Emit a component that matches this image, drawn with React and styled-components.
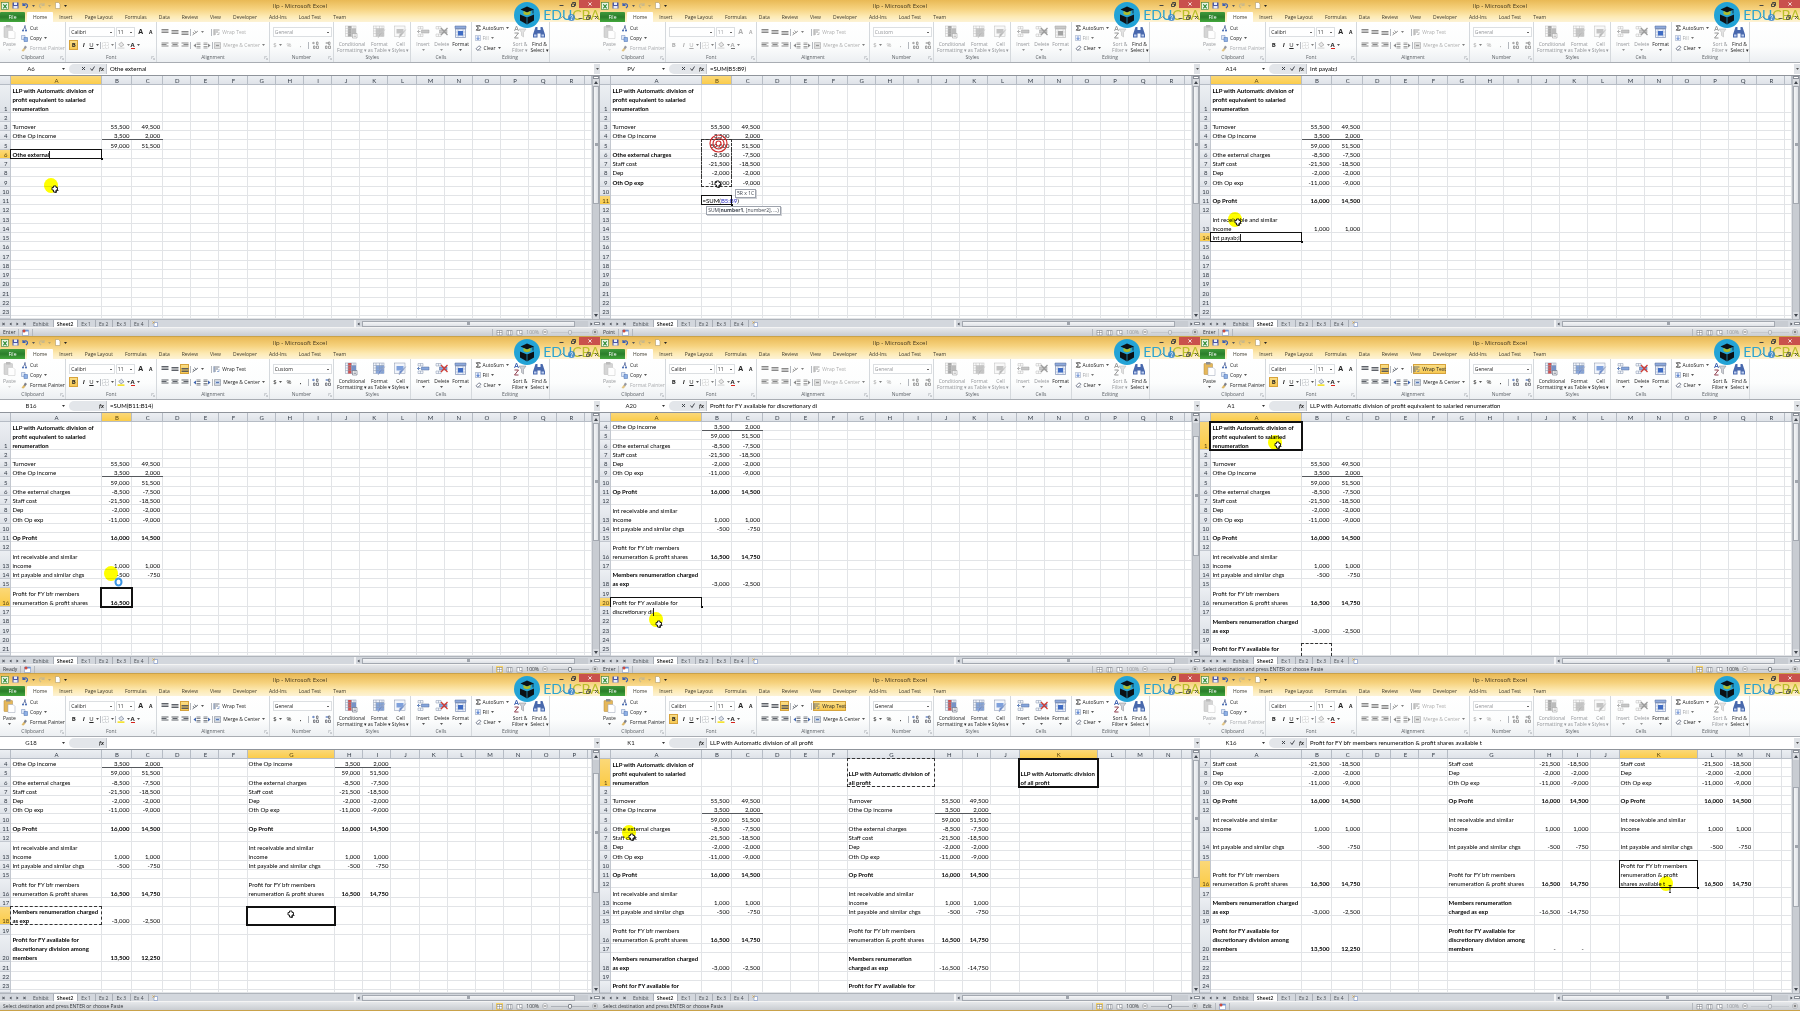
import React from 'react';
import styled, { createGlobalStyle, css } from 'styled-components';

const GlobalStyle = createGlobalStyle`
  * { box-sizing: border-box; }
  body { margin: 0; background: #c9a24a; }
  button, select, input {
    font: inherit;
    color: inherit;
    border: 0;
    padding: 0;
    margin: 0;
    background: none;
    appearance: none;
    border-radius: 0;
    outline: none;
  }
`;

const uiFont = '"Open Sans", "Noto Sans", sans-serif';
const cellFont = 'Lato, "Open Sans", sans-serif';

/* ---------- shell ---------- */

const Wall = styled.main`
  display: grid;
  grid-template-columns: repeat(3, minmax(0, 1fr));
  grid-auto-rows: minmax(337px, 1fr);
  min-height: 100vh;
`;
const Window = styled.section`
  display: flex;
  flex-direction: column;
  overflow: hidden;
  background: #fff;
  border-bottom: 1px solid #c9a24a;
  font-family: ${uiFont};
  font-size: 5px;
  line-height: 6px;
  color: #222;
`;
const Head = styled.header`
  position: relative;
  background: linear-gradient(#e9b955, #f6d27e 40%, #fdeab4 75%, #fdf3d6);
`;
const TitleBar = styled.div`
  display: grid;
  grid-template-columns: 1fr auto 1fr;
  align-items: start;
  height: 12px;
`;
const QuickBar = styled.div`
  display: flex;
  align-items: center;
  gap: 3px;
  height: 11px;
  padding-left: 1px;
`;
const Title = styled.h1`
  margin: 0;
  font-size: 6px;
  font-weight: 400;
  line-height: 12px;
  color: #40351c;
`;
const WindowButtons = styled.div`
  display: flex;
  justify-content: flex-end;
  height: 8px;
`;
const WinButton = styled.button`
  display: flex;
  align-items: center;
  justify-content: center;
  width: ${({ $close }) => ($close ? '21px' : '12px')};
  height: 8px;
  background: ${({ $close }) => ($close ? '#c9504c' : 'transparent')};
`;
const Tabs = styled.nav`
  display: flex;
  align-items: stretch;
  height: 10px;
`;
const FileTab = styled.button`
  width: 25px;
  margin-right: 2px;
  color: #fff;
  background: linear-gradient(#3f9a3c, #2a7d2a 50%, #43a83c);
  border-radius: 1px 1px 0 0;
`;
const Tab = styled.button`
  padding: 0 6px;
  color: #3d392c;
  background: ${({ $on }) => ($on ? '#fff' : 'transparent')};
  border-radius: 1px 1px 0 0;
`;

/* ---------- logo ---------- */

const Badge = styled.div`
  position: absolute;
  z-index: 3;
  top: 2px;
  right: 0;
  display: flex;
  align-items: center;
  gap: 3px;
  height: 26px;
`;
const Brand = styled.span`
  font-family: Lato, sans-serif;
  font-size: 14px;
  line-height: 16px;
  color: ${({ $gold }) => ($gold ? '#b9bf2a' : '#2ca4cf')};
`;
const MdiButtons = styled.div`
  position: absolute;
  z-index: 4;
  right: 1px;
  bottom: 0;
  height: 10px;
  display: flex;
  align-items: center;
  gap: 3px;
  opacity: 0.8;
`;

/* ---------- ribbon ---------- */

const Ribbon = styled.div`
  display: flex;
  height: 41px;
  background: linear-gradient(#fff, #fcfdfd 60%, #eceff2);
  border-bottom: 1px solid #a9adb3;
`;
const Group = styled.div`
  flex: ${({ $w }) => $w} 0 0;
  min-width: 0;
  display: flex;
  flex-direction: column;
  border-right: ${({ $last }) => ($last ? 0 : '1px solid #d5d9dd')};
`;
const GroupBody = styled.div`
  flex: 1;
  display: flex;
  flex-direction: ${({ $rows }) => ($rows ? 'column' : 'row')};
  gap: ${({ $gap = 1 }) => $gap}px;
  padding: ${({ $rows }) => ($rows ? '4px 1px 0 3px' : '1px 1px 0 3px')};
`;
const GroupLabel = styled.div`
  display: grid;
  grid-template-columns: 5px 1fr 5px;
  align-items: center;
  text-align: center;
  line-height: 9px;
  height: 9px;
  color: #5a5f64;
`;
const Line = styled.div`
  display: flex;
  align-items: center;
  justify-content: ${({ $spread }) => ($spread ? 'space-between' : 'flex-start')};
  gap: ${({ $gap = 2 }) => $gap}px;
  height: 12px;
`;
const Stack = styled.div`
  display: flex;
  flex-direction: column;
`;
const Small = styled.button`
  display: flex;
  align-items: center;
  gap: 2px;
  height: 10px;
  white-space: nowrap;
  color: ${({ $off }) => ($off ? '#94969a' : '#222')};
  opacity: ${({ $off }) => ($off ? 0.8 : 1)};
`;
const Tool = styled.button`
  display: flex;
  align-items: center;
  justify-content: center;
  gap: 2px;
  min-width: 9px;
  height: 10px;
  white-space: nowrap;
  color: ${({ $off }) => ($off ? '#8f9194' : '#222')};
  ${({ $off }) => $off && css`filter: grayscale(1); opacity: 0.75;`}
  ${({ $on }) => $on && css`
    background: linear-gradient(#fbe08a, #f6c64d);
    box-shadow: inset 0 0 0 1px #d6a33c;
  `}
`;
const Big = styled.button`
  display: flex;
  flex-direction: column;
  align-items: center;
  justify-content: flex-start;
  flex: ${({ $w }) => ($w ? `${$w} 0 0` : 'none')};
  min-width: 0;
  padding-top: 2px;
  gap: 2px;
  white-space: nowrap;
  color: ${({ $off }) => ($off ? '#94969a' : '#222')};
  svg { flex: none; }
  ${({ $off }) => $off && css`svg { filter: grayscale(1); opacity: 0.6; }`}
`;
const Pick = styled.select`
  flex: ${({ $w }) => $w} 0 0;
  min-width: 0;
  height: 10px;
  padding-left: 1px;
  color: ${({ $off }) => ($off ? '#94969a' : '#222')};
  border: 1px solid #dcdfe2;
  background: #fff linear-gradient(#666, #666) right 2px center / 2px 1px no-repeat;
  opacity: 1;
`;
const Glyph = styled.span`
  font-size: ${({ $s = 6 }) => $s}px;
  font-weight: ${({ $b }) => ($b ? 700 : 400)};
  font-style: ${({ $i }) => ($i ? 'italic' : 'normal')};
  text-decoration: ${({ $u }) => ($u ? 'underline' : 'none')};
  border-bottom: ${({ $bar }) => ($bar ? `1px solid ${$bar}` : 0)};
`;

/* ---------- formula bar ---------- */

const FormulaBar = styled.div`
  display: flex;
  align-items: center;
  height: 13px;
  padding-bottom: 1px;
  background: #fff;
  border-bottom: 1px solid #8f949b;
  font-family: ${cellFont};
  font-size: 6px;
`;
const NameBox = styled.input`
  width: 62px;
  height: 10px;
  text-align: center;
`;
const FormulaTools = styled.div`
  display: flex;
  align-items: center;
  justify-content: flex-end;
  gap: 4px;
  width: 38px;
  height: 10px;
  margin-left: 4px;
  padding-right: 2px;
  background: #e3e6ea;
  border-radius: 5px 0 0 5px;
  border-right: 1px solid #c3c7cc;
`;
const FormulaInput = styled.input`
  flex: 1;
  min-width: 0;
  height: 10px;
  padding-left: 3px;
  color: #000;
`;
const Expand = styled.button`
  width: 6px;
  height: 10px;
  display: flex;
  align-items: center;
  justify-content: center;
  background: #dfe2e6;
`;

/* ---------- sheet ---------- */

const SheetArea = styled.div`
  position: relative;
  flex: 1;
  display: flex;
  min-height: 0;
`;
const Grid = styled.table`
  flex: 1;
  min-width: 0;
  min-height: 0;
  contain: size;
  overflow: hidden;
  display: grid;
  grid-template-columns: ${({ $cols }) => $cols};
  grid-template-rows: ${({ $rows }) => $rows};
  font-family: ${cellFont};
  font-size: 6px;
  line-height: 9px;
  color: #000;
  thead, tbody, tr { display: contents; }
`;
const headFill = css`
  background: ${({ $on }) => ($on ? 'linear-gradient(#fbd878, #fbcb45)' : 'linear-gradient(#eceff3, #dde1e7)')};
  color: ${({ $on }) => ($on ? '#5a4612' : '#333b46')};
  font-weight: 400;
  padding: 0;
  overflow: hidden;
`;
const ColHead = styled.th`
  ${headFill}
  box-shadow: inset -1px -1px #b6bcc5;
  line-height: 10px;
  text-align: center;
`;
const RowHead = styled.th`
  ${headFill}
  display: flex;
  align-items: flex-end;
  justify-content: center;
  box-shadow: inset -1px -1px #c3c8d0;
`;
const Cell = styled.td`
  position: relative;
  display: flex;
  align-items: ${({ $top }) => ($top ? 'flex-start' : 'flex-end')};
  justify-content: ${({ $num }) => ($num ? 'flex-end' : 'flex-start')};
  min-width: 0;
  min-height: 0;
  padding: ${({ $num }) => ($num ? '0 3px 0 0' : '0 0 0 1px')};
  box-shadow: inset -1px -1px #e2e4e7;
  font-weight: ${({ $bold }) => ($bold ? 700 : 400)};
  white-space: pre;
  ${({ $rule }) => $rule && css`box-shadow: inset 0 -1px #55585d;`}
  ${({ $mode }) => $mode && css`
    z-index: 1;
    &::after {
      content: '';
      position: absolute;
      inset: ${$mode === 'select' ? '-1px -1px -1px -2px' : '-1px 0 0 -1px'};
      border: ${$mode === 'select' ? '2px' : '1px'} solid #111;
      ${$mode === 'open' && 'border-bottom: 0;'}
      pointer-events: none;
    }
    &::before {
      content: '';
      position: absolute;
      right: -1px;
      bottom: -1px;
      width: 2px;
      height: 2px;
      background: #111;
      z-index: 1;
    }
  `}
  ${({ $ants }) => $ants && css`
    z-index: 1;
    &::after {
      content: '';
      position: absolute;
      inset: -1px 0 0 -1px;
      border: 0 dashed #333;
      border-left-width: 1px;
      border-right-width: 1px;
      border-top-width: ${$ants.includes('t') ? '1px' : 0};
      border-bottom-width: ${$ants.includes('b') ? '1px' : 0};
      pointer-events: none;
    }
  `}
`;
const Caret = styled.span`
  align-self: flex-end;
  width: 1px;
  height: 8px;
  background: #222;
`;
const RangeRef = styled.span`
  color: #2a2ac0;
`;

const VScroll = styled.div`
  width: 8px;
  display: flex;
  flex-direction: column;
  align-items: center;
  background: #d9dce1;
  border-left: 1px solid #b9bdc4;
  border-right: 1px solid #a6aab1;
`;
const SplitBox = styled.div`
  width: 6px;
  height: 3px;
  background: #fff;
  border: 1px solid #8a8f97;
`;
const Arrow = styled.button`
  width: 6px;
  height: 7px;
  display: flex;
  align-items: center;
  justify-content: center;
`;
const Track = styled.div`
  flex: 1;
  display: flex;
  flex-direction: ${({ $h }) => ($h ? 'row' : 'column')};
  width: ${({ $h }) => ($h ? 'auto' : '6px')};
  height: ${({ $h }) => ($h ? '6px' : 'auto')};
  background: #c8ccd2;
`;
const Gap = styled.div`
  flex: ${({ $n }) => $n} 0 0;
`;
const Thumb = styled.div`
  flex: ${({ $n }) => $n} 0 0;
  display: flex;
  align-items: center;
  justify-content: center;
  background: linear-gradient(${({ $h }) => ($h ? '180deg' : '90deg')}, #f4f5f7, #dfe2e7);
  border: 1px solid #a3a8b0;
  &::after {
    content: '';
    width: 3px;
    height: 3px;
    background: #a0a5ad;
  }
`;

/* ---------- footer ---------- */

const SheetTabs = styled.div`
  display: flex;
  align-items: center;
  height: 8px;
  padding-left: 2px;
  background: #d3d7dd;
  border-top: 1px solid #b0b5bc;
  color: #4a4f55;
`;
const NavArrows = styled.div`
  display: flex;
  gap: 4px;
  width: 28px;
`;
const SheetTab = styled.button`
  height: 7px;
  padding: 0 4px 0 3px;
  line-height: 6px;
  color: ${({ $on }) => ($on ? '#111' : '#4a4f55')};
  font-weight: ${({ $on }) => ($on ? 600 : 400)};
  background: ${({ $on }) => ($on ? '#fff' : 'transparent')};
  border-right: 1px solid #a9aeb6;
`;
const TabSpace = styled.div`
  flex: 197 0 0;
  padding-left: 3px;
  display: flex;
`;
const HScroll = styled.div`
  flex: 238 0 0;
  display: flex;
  align-items: center;
  border-left: 2px solid #f4f5f7;
`;
const StatusBar = styled.footer`
  display: flex;
  align-items: center;
  justify-content: space-between;
  height: 9px;
  padding: 0 2px 0 3px;
  background: linear-gradient(#e6e8eb, #c9ccd1);
  border-top: 1px solid #f4f4f4;
  color: #33363b;
`;
const StatusPart = styled.div`
  display: flex;
  align-items: center;
  gap: 3px;
`;
const Divider = styled.i`
  width: 1px;
  height: 7px;
  background: #b4b8be;
`;
const Faded = styled(StatusPart)`
  color: ${({ $off }) => ($off ? '#94979c' : '#33363a')};
`;
const Zoom = styled.input`
  width: 38px;
  height: 6px;
  background: linear-gradient(#aeb2b8, #aeb2b8) center / 100% 1px no-repeat;
  opacity: ${({ $off }) => ($off ? 0.4 : 1)};
  &::-webkit-slider-thumb {
    appearance: none;
    width: 4px;
    height: 5px;
    border: 1px solid #80858c;
    border-radius: 1px 1px 2px 2px;
    background: #f7f7f7;
  }
`;

/* ---------- pointer and tips floating over the sheet ---------- */

const Pin = styled.div`
  position: absolute;
  z-index: 5;
  left: ${({ $x }) => $x}%;
  top: ${({ $y }) => $y}%;
  display: flex;
  ${({ $multiply }) => $multiply && 'mix-blend-mode: multiply;'}
`;
const Tip = styled(Pin)`
  height: 9px;
  padding: 0 1px;
  line-height: 7px;
  color: #3c424d;
  background: #fff;
  border: 1px solid #9ea3ad;
  box-shadow: 1px 1px 0 #cfd1d5;
  white-space: nowrap;
`;

/* ---------- icons ---------- */

const Svg = ({ w = 7, h = w, box = '0 0 14 14', children }) => (
  <svg width={w} height={h} viewBox={box} fill="none" aria-hidden="true">{children}</svg>
);
const Down = ({ c = '#555' }) => (
  <svg width="3" height="2" viewBox="0 0 6 4" aria-hidden="true"><path d="M0 0h6L3 4z" fill={c} /></svg>
);
const ExcelIcon = () => (
  <Svg w={8}>
    <rect x="1" y="1" width="12" height="12" fill="#e9f5e6" stroke="#2f7d32" />
    <path d="M4 4l6 7M10 4l-6 7" stroke="#2f8a35" strokeWidth="2" />
  </Svg>
);
const SaveIcon = () => (
  <Svg>
    <path d="M1 1h12v12H1z" fill="#4a56a8" />
    <path d="M4 1h6v5H4zM3 8h8v5H3z" fill="#e8ecf8" />
  </Svg>
);
const UndoIcon = ({ c = '#3b5fb5', flip }) => (
  <Svg>
    <path d="M3 6c4-4 9-2 8 3l-3 3M2 2v5h5" stroke={c} strokeWidth="2.4" transform={flip ? 'matrix(-1 0 0 1 14 0)' : undefined} />
  </Svg>
);
const PageIcon = () => (
  <Svg><path d="M3 1h6l3 3v9H3z" fill="#fff" stroke="#a08d5b" /></Svg>
);
const PasteIcon = () => (
  <Svg w={13} h={14} box="0 0 26 28">
    <rect x="2" y="3" width="17" height="22" rx="1" fill="#e5b75a" stroke="#b08a3c" />
    <rect x="6" y="0" width="9" height="5" fill="#8b8f96" />
    <path d="M10 11h10l4 4v12H10z" fill="#fff" stroke="#9aa3b5" />
  </Svg>
);
const CutIcon = () => (
  <Svg><path d="M9 1L5 9M7 1l3 8" stroke="#4b5f97" strokeWidth="1.6" /><circle cx="4" cy="11" r="2" fill="#3d62ad" /><circle cx="10" cy="11" r="2" fill="#3d62ad" /></Svg>
);
const CopyIcon = () => (
  <Svg><path d="M1 1h7v8H1z" fill="#dbe6f7" stroke="#6d86b8" /><path d="M6 5h7v8H6z" fill="#8fb1e6" stroke="#4068ad" /></Svg>
);
const BrushIcon = () => (
  <Svg><path d="M8 1l4 3-4 5-3-2z" fill="#7d7f88" /><path d="M5 6l4 3-4 4-4-1z" fill="#ddb867" /></Svg>
);
const Bars = ({ kind, at = 2 }) => (
  <Svg w={8} h={6} box="0 0 16 12">
    {[0, 1, 2].map((i) => (
      <path
        key={i}
        d={`M${kind === 'right' && i === 1 ? 5 : kind === 'center' && i === 1 ? 3 : 1} ${at + i * 3}h${i === 1 && kind ? 10 : 14}`}
        stroke="#4c5058"
        strokeWidth="1.8"
      />
    ))}
  </Svg>
);
const BordersIcon = () => (
  <Svg w={7}><path d="M1 1h12v12H1zM7 1v12M1 7h12" stroke="#a9acb2" strokeDasharray="2 1" /></Svg>
);
const BucketIcon = () => (
  <Svg w={8}><path d="M3 6l5-4 4 5-5 3z" fill="#dfe4ec" stroke="#5f6b84" /><path d="M1 11h12v3H1z" fill="#f6e432" /></Svg>
);
const AngleIcon = () => (
  <Svg w={7}><path d="M1 12L12 4M2 6l3 4M5 3l4 5" stroke="#5a5f68" strokeWidth="1.6" /></Svg>
);
const IndentIcon = ({ flip }) => (
  <Svg w={8} h={7} box="0 0 16 14">
    <g transform={flip ? 'matrix(-1 0 0 1 16 0)' : undefined}>
      <path d="M7 2h8M7 5h8M7 9h8M7 12h8" stroke="#5a5f68" strokeWidth="1.5" />
      <path d="M6 3v8L1 7z" fill="#3f66b3" />
    </g>
  </Svg>
);
const WrapIcon = () => (
  <Svg w={7}><path d="M1 2h12M1 6h9M1 10h5" stroke="#596070" strokeWidth="1.6" /><path d="M2 1v12M12 6v5H8" stroke="#4068ad" /></Svg>
);
const MergeIcon = () => (
  <Svg w={7}><path d="M1 1h12v12H1zM1 4h12M1 10h12" stroke="#6b7280" /><path d="M3 5h8v4H3z" fill="#8fb1e6" /><path d="M4 7h6" stroke="#27407a" /></Svg>
);
const DecimalIcon = ({ flip }) => (
  <Svg w={8} h={8} box="0 0 16 16">
    <path d={flip ? 'M3 4h6M6 2v4' : 'M1 4h5M4 2L1 4l3 2'} stroke="#3f66b3" strokeWidth="1.4" />
    <path d="M9 2h3v5H9zM3 10h3v5H3zM9 10h4v5H9z" stroke="#545860" strokeWidth="1.4" />
  </Svg>
);
const GridIcon = ({ kind }) => (
  <Svg w={13} h={14} box="0 0 26 28">
    <rect x="1" y="2" width="21" height="21" fill="#f2f5fb" stroke="#8794ad" />
    {kind === 'cond' && <path d="M6 2h7v21H6z" fill="#d35350" />}
    {kind === 'cond' && <path d="M13 7h9v11h-9z" fill="#7291cf" />}
    {kind === 'table' && <path d="M6 7h16v16H6z" fill="#86a6dd" />}
    {kind === 'cell' && <path d="M5 8h14v9H5z" fill="#7ea0dc" />}
    {kind !== 'cell' && <path d="M1 7h21M1 12h21M1 17h21M6 2v21M13 2v21M18 2v21" stroke="#8794ad" />}
    {kind === 'cond' ? <path d="M15 17h9v9h-9zM17 20h5M17 23h5" fill="#fff" stroke="#40485c" />
      : <path d="M24 9l-9 12-5 5 1-7z" fill="#6a8bcd" stroke="#b0b9cc" />}
  </Svg>
);
const CellsIcon = ({ kind }) => (
  <Svg w={13} h={14} box="0 0 26 28">
    {kind === 'format' ? (
      <>
        <path d="M2 2h22v5H2z" fill="#8fa9da" stroke="#51699b" />
        <path d="M3 8h20v17H3z" fill="#eef2fb" stroke="#51699b" />
        <path d="M8 8v17M18 8v17M3 14h20M3 20h20" stroke="#93a4c6" />
        <path d="M8 12h10v9H8z" fill="#3f6cc4" />
      </>
    ) : (
      <>
        <path d="M2 3h10v5H2zM2 18h10v5H2zM7 3v5M7 18v5" fill="#f2f5fb" stroke="#8794ad" />
        <path d="M9 10h15v6H9z" fill="#87a6dc" stroke="#51699b" />
        {kind === 'delete' ? <path d="M12 6l13 14M25 6L12 20" stroke="#d23b33" strokeWidth="2.6" /> : <path d="M7 13H1M4 10l-3 3 3 3" stroke="#4068ad" strokeWidth="1.6" />}
      </>
    )}
  </Svg>
);
const SigmaIcon = () => <Svg w={6}><path d="M12 4V2H3l5 5-5 5h9v-2" stroke="#222" strokeWidth="2" /></Svg>;
const FillIcon = () => <Svg w={6}><path d="M1 1h12v12H1z" fill="#e7edf8" stroke="#61779f" /><path d="M7 3v7M4 7l3 4 3-4" stroke="#2f62c4" strokeWidth="2" /></Svg>;
const EraserIcon = () => <Svg w={7} h={6}><path d="M5 12l-4-3 7-7 5 3-7 7z" fill="#fff" stroke="#444d66" strokeWidth="1.5" /><path d="M5 12h8" stroke="#444d66" /></Svg>;
const SortIcon = () => (
  <Svg w={14} box="0 0 28 28">
    <path d="M3 12L7 2l4 10M4 9h6" stroke="#4467b5" strokeWidth="2" />
    <path d="M3 16h8L3 26h8" stroke="#8f3d4d" strokeWidth="2" />
    <path d="M12 8h14l-5 7v9l-4-3v-6z" fill="#cfd2d8" stroke="#83878f" />
  </Svg>
);
const FindIcon = () => (
  <Svg w={14} box="0 0 28 28">
    <path d="M7 4h4v6h6V4h4l5 15v6h-9v-8h-6v8H2v-6z" fill="#4868ad" />
    <path d="M4 19h5v4H4zM19 19h5v4h-5z" fill="#b9cbee" />
  </Svg>
);
const LogoIcon = () => (
  <Svg w={26} box="0 0 52 52">
    <circle cx="26" cy="26" r="26" fill="#23a3d6" />
    <path d="M12 25l14 6 14-6v12l-14 8-14-8z" fill="#0c1116" />
    <path d="M13 15l13-6 14 6-14 6z" fill="#0c1116" />
    <path d="M19 18v6c3 3 11 3 14 0v-6l-7 3z" fill="#aebd2c" />
    <path d="M38 15v8" stroke="#0c1116" strokeWidth="1.5" />
    <path d="M26 31v14" stroke="#23a3d6" strokeWidth="1.4" />
  </Svg>
);
const StrokeIcon = ({ d }) => <Svg w={5} box="0 0 10 10"><path d={d} stroke="#33373d" strokeWidth="1.8" /></Svg>;
const Corner = () => <Svg w={4} box="0 0 8 8"><path d="M1 6V1h5M3 3l4 4V4M7 7H4" stroke="#a9adb3" /></Svg>;
const NavIcon = ({ flip, bar }) => (
  <Svg w={3} h={4} box="0 0 6 8">
    <g transform={flip ? 'matrix(-1 0 0 1 6 0)' : undefined}>
      <path d="M5 1v6L1 4z" fill="#40454d" />
      {bar && <path d="M0 1v6" stroke="#40454d" strokeWidth="1.6" />}
    </g>
  </Svg>
);
const ViewIcon = ({ on, d }) => (
  <Svg w={7}>
    <rect width="14" height="14" fill={on ? '#fbd566' : 'transparent'} />
    <rect x="2" y="3" width="10" height="9" fill="#fff" stroke="#70757d" />
    <path d={d} stroke="#70757d" />
  </Svg>
);

const Blob = ({ x, y }) => (
  <Pin $x={x} $y={y} $multiply>
    <Svg w={14} h={15} box="0 0 14 15"><ellipse cx="7" cy="7.5" rx="7" ry="7.5" fill="#ffff00" /></Svg>
  </Pin>
);
const cursors = {
  cross: (
    <Svg w={8} box="0 0 16 16">
      <path d="M5 2h5v3h3v5h-3v4H5v-4H2V5h3z" fill="#fff" stroke="#111" strokeWidth="1.8" />
      <path d="M7 15h4v-4h4" stroke="#111" strokeWidth="1.6" />
    </Svg>
  ),
  busy: <Svg w={9} h={10} box="0 0 18 20"><ellipse cx="9" cy="10" rx="6" ry="7" fill="#fff" stroke="#3c96e4" strokeWidth="4" /></Svg>,
  beam: <Svg w={4} h={8} box="0 0 8 16"><path d="M1 1h6M4 1v14M2 15h4" stroke="#111" strokeWidth="1.6" /></Svg>,
  target: (
    <Svg w={19} box="0 0 38 38">
      <circle cx="19" cy="19" r="17" stroke="#cf2a2a" strokeWidth="2.4" />
      <circle cx="19" cy="19" r="11" stroke="#cf2a2a" strokeWidth="2.4" />
      <circle cx="19" cy="19" r="5" stroke="#cf2a2a" strokeWidth="2.4" />
    </Svg>
  ),
};

/* ---------- data ---------- */

const AUTO = 'LLP with Automatic division of\nprofit equivalent to salaried\nrenumeration';
const AVAILABLE = 'Profit for FY available for\ndiscretionary division among\nmembers';

const ledger = {
  1: { label: AUTO, bold: true },
  3: { label: 'Turnover', v: ['55,500', '49,500'] },
  4: { label: 'Othe Op income', v: ['3,500', '2,000'], rule: true },
  5: { v: ['59,000', '51,500'] },
  6: { label: 'Othe external charges', v: ['-8,500', '-7,500'] },
  7: { label: 'Staff cost', v: ['-21,500', '-18,500'] },
  8: { label: 'Dep', v: ['-2,000', '-2,000'] },
  9: { label: 'Oth Op exp', v: ['-11,000', '-9,000'] },
  11: { label: 'Op Profit', v: ['16,000', '14,500'], bold: true, boldValues: true },
  13: { label: 'Int receivable and similar\nincome', v: ['1,000', '1,000'] },
  14: { label: 'Int payable and similar chgs', v: ['-500', '-750'] },
  16: { label: 'Profit for FY bfr members\nrenumeration & profit shares', v: ['16,500', '14,750'], boldValues: true },
  18: { label: 'Members renumeration charged\nas exp', v: ['-3,000', '-2,500'], bold: true },
  20: { label: AVAILABLE, v: ['13,500', '12,250'], bold: true, boldValues: true },
};

const letters = 'ABCDEFGHIJKLMNOPQR'.split('');
const narrow = { A: 205, B: 70, C: 70 };
const twoBlocks = { ...narrow, G: 199 };
const threeBlocks = { ...twoBlocks, K: 178 };

// lays a copy of the ledger down with its label column at `col`
const block = (col, from, to) => {
  const at = letters.indexOf(col);
  const cells = {};
  Object.entries(ledger).forEach(([n, row]) => {
    if (n < from || n > to) return;
    if (row.label) cells[col + n] = { text: row.label, bold: row.bold };
    (row.v || []).forEach((text, i) => {
      cells[letters[at + 1 + i] + n] = { text, num: true, bold: row.boldValues, rule: row.rule };
    });
  });
  return cells;
};

const tall = { 1: 3, 13: 2, 16: 2, 18: 2, 20: 3 };
const frames = [
  {
    name: 'A6', formula: 'Othe external', state: 'Enter', mode: 'edit', bold: true, font: 'Calibri', number: 'General',
    from: 1, to: 23, heights: { 1: 3 }, widths: narrow, last: 'R', col: 'A', row: 6, scroll: [0, 115, 108],
    cells: { ...block('A', 1, 5), A6: { text: 'Othe external', bold: true, mode: 'edit', caret: true } },
    blob: [7.4, 42], cursor: ['cross', 8.5, 45],
  },
  {
    name: 'PV', formula: '=SUM(B5:B9)', state: 'Point', mode: 'point', font: '', number: 'Custom',
    from: 1, to: 23, heights: { 1: 3 }, widths: narrow, last: 'R', col: 'B', row: 11, scroll: [0, 115, 108],
    cells: {
      ...block('A', 1, 9),
      A6: { text: 'Othe external charges', bold: true },
      A9: { text: 'Oth Op exp', bold: true },
      B5: { text: '59,000', num: true, ants: 't' },
      B6: { text: '-8,500', num: true, ants: 'm' },
      B7: { text: '-21,500', num: true, ants: 'm' },
      B8: { text: '-2,000', num: true, ants: 'm' },
      B9: { text: '-11,000', num: true, ants: 'b' },
      B11: { text: <>=SUM(<RangeRef>B5:B9</RangeRef>)</>, mode: 'edit' },
    },
    target: [18.2, 24], cursor: ['cross', 19, 43],
    tips: [{ x: 22.5, y: 46.5, text: '5R x 1C' }, { x: 17.7, y: 53.4, text: <>SUM(<b>number1</b>, [number2], ...)</> }],
  },
  {
    name: 'A14', formula: 'Int payab;l', state: 'Enter', mode: 'edit', font: 'Calibri', number: 'General',
    from: 1, to: 22, heights: { 1: 3, 13: 2 }, widths: narrow, last: 'R', col: 'A', row: 14, scroll: [0, 115, 108],
    cells: { ...block('A', 1, 13), A14: { text: 'Int payab;l', mode: 'edit', caret: true } },
    blob: [4.7, 56], cursor: ['cross', 5.7, 58.5],
  },
  {
    name: 'B16', formula: '=SUM(B11:B14)', state: 'Ready', mode: 'ready', bold: true, font: 'Calibri', number: 'Custom',
    from: 1, to: 21, heights: tall, skip: [18, 20], widths: narrow, last: 'R', col: 'B', row: 16, scroll: [0, 115, 108],
    cells: { ...block('A', 1, 16), B16: { text: '16,500', num: true, bold: true, mode: 'select' }, C16: {} },
    blob: [17.3, 63], cursor: ['busy', 19, 67.5],
  },
  {
    name: 'A20', formula: 'Profit for FY available for discretionary di', state: 'Enter', mode: 'edit', font: 'Calibri', number: 'General',
    from: 4, to: 25, heights: tall, skip: [20], widths: narrow, last: 'R', col: 'A', row: 20, scroll: [13, 117, 93],
    cells: {
      ...block('A', 4, 18),
      A20: { text: 'Profit for FY available for', mode: 'open' },
      A21: { text: 'discretionary di', caret: true },
    },
    blob: [8.1, 82], cursor: ['cross', 9.2, 85],
  },
  {
    name: 'A1', formula: 'LLP with Automatic division of profit equivalent to salaried renumeration',
    state: 'Select destination and press ENTER or choose Paste', mode: 'ready', paste: true, bold: true, wrap: true,
    font: 'Calibri', number: 'General', from: 1, to: 19, cut: 20, heights: tall, widths: narrow, last: 'R',
    col: 'A', row: 1, scroll: [0, 115, 108],
    cells: { ...block('A', 1, 18), A1: { text: AUTO, bold: true, mode: 'select' }, A20: { text: AVAILABLE, bold: true }, B20: { ants: 't' } },
    blob: [11.3, 9], cursor: ['cross', 12.4, 11.5],
  },
  {
    name: 'G18', formula: '', state: 'Select destination and press ENTER or choose Paste', mode: 'ready', paste: true,
    font: 'Calibri', number: 'General', from: 4, to: 23, heights: tall, widths: twoBlocks, last: 'P',
    col: 'G', row: 18, scroll: [13, 117, 93],
    cells: {
      ...block('A', 4, 20), ...block('G', 4, 16),
      A18: { text: ledger[18].label, bold: true, ants: 'tb' },
      G18: { mode: 'select' },
    },
    cursor: ['cross', 47.8, 66],
  },
  {
    name: 'K1', formula: 'LLP with Automatic division of all profit',
    state: 'Select destination and press ENTER or choose Paste', mode: 'ready', paste: true, bold: true, wrap: true,
    font: 'Calibri', number: 'General', from: 1, to: 19, cut: 20, heights: tall, widths: threeBlocks, last: 'N',
    col: 'K', row: 1, scroll: [0, 115, 108],
    cells: {
      ...block('A', 1, 18), ...block('G', 3, 16),
      G1: { text: 'LLP with Automatic division of\nall profit', bold: true, ants: 'tb' },
      K1: { text: 'LLP with Automatic division\nof all profit', bold: true, mode: 'select' },
      G18: { text: 'Members renumeration\ncharged as exp', bold: true },
      H18: { text: '-16,500', num: true },
      I18: { text: '-14,750', num: true },
      A20: { text: AVAILABLE, bold: true },
      G20: { text: AVAILABLE, bold: true },
    },
    blob: [3.6, 31], cursor: ['cross', 4.7, 34],
  },
  {
    name: 'K16', formula: 'Profit for FY bfr members renumeration & profit shares available t', state: 'Edit', mode: 'edit',
    font: 'Calibri', number: 'General', from: 7, to: 24, heights: { ...tall, 14: 2, 16: 3 }, widths: threeBlocks, last: 'N',
    col: 'K', row: 16, scroll: [27, 117, 79],
    cells: {
      ...block('A', 7, 20), ...block('G', 7, 20), ...block('K', 7, 16),
      K16: { text: 'Profit for FY bfr members\nrenumeration & profit\nshares available t', mode: 'edit' },
      G18: { text: 'Members renumeration\ncharged as exp', bold: true },
      H18: { text: '-16,500', num: true },
      I18: { text: '-14,750', num: true },
      H20: { text: '-   ', num: true },
      I20: { text: '-   ', num: true },
    },
    blob: [76.5, 52], cursor: ['beam', 78, 55.5],
  },
];

/* ---------- parts ---------- */

const menu = ['Home', 'Insert', 'Page Layout', 'Formulas', 'Data', 'Review', 'View', 'Developer', 'Add-Ins', 'Load Test', 'Team'];

const TopBar = () => (
  <Head>
    <TitleBar>
      <QuickBar>
        <ExcelIcon /><SaveIcon /><UndoIcon /><Down /><UndoIcon c="#c9b98b" flip /><Down c="#b7a473" /><PageIcon /><Down c="#222" />
      </QuickBar>
      <Title>llp - Microsoft Excel</Title>
      <WindowButtons>
        <WinButton aria-label="Minimize"><StrokeIcon d="M1 7h8" /></WinButton>
        <WinButton aria-label="Restore"><StrokeIcon d="M1 4h6v5H1zM3 3V1h6v6H7" /></WinButton>
        <WinButton $close aria-label="Close"><Svg w={4} box="0 0 10 10"><path d="M1 1l8 8M9 1L1 9" stroke="#fff" strokeWidth="2" /></Svg></WinButton>
      </WindowButtons>
    </TitleBar>
    <Tabs>
      <FileTab>File</FileTab>
      {menu.map((m) => <Tab key={m} $on={m === 'Home'}>{m}</Tab>)}
    </Tabs>
    <Badge>
      <LogoIcon />
      <span><Brand>EDU</Brand><Brand $gold>CBA</Brand></span>
    </Badge>
    <MdiButtons>
      <Svg w={5} box="0 0 10 10"><path d="M1 7l4-4 4 4" stroke="#5d6a73" strokeWidth="1.6" /></Svg>
      <Svg w={7}><circle cx="7" cy="7" r="7" fill="#2f7fd2" /><path d="M5 5c0-3 4-3 4 0 0 2-2 2-2 4M7 10v2" stroke="#fff" strokeWidth="1.5" /></Svg>
      <StrokeIcon d="M1 7h8" />
      <StrokeIcon d="M1 4h6v5H1zM3 3V1h6v6H7" />
      <StrokeIcon d="M2 2l6 6M8 2L2 8" />
    </MdiButtons>
  </Head>
);

const RibbonBar = ({ f }) => {
  const ready = f.mode === 'ready';
  const off = !ready;
  const noFont = f.mode === 'point';
  return (
    <Ribbon>
      <Group $w={66}>
        <GroupBody $gap={5}>
          <Big $off={!f.paste}><PasteIcon /><span>Paste</span><Down c={f.paste ? '#555' : '#bbb'} /></Big>
          <Stack>
            <Small><CutIcon />Cut</Small>
            <Small><CopyIcon />Copy <Down /></Small>
            <Small $off={off}><BrushIcon />Format Painter</Small>
          </Stack>
        </GroupBody>
        <GroupLabel><i /><span>Clipboard</span><Corner /></GroupLabel>
      </Group>
      <Group $w={91}>
        <GroupBody $rows>
          <Line $gap={1}>
            <Pick $w={47} $off={noFont} aria-label="Font" defaultValue={f.font}><option>{f.font}</option></Pick>
            <Pick $w={18} $off={noFont} aria-label="Font size"><option>11</option></Pick>
            <Tool $off={noFont}><Glyph $s={7} $b>A</Glyph></Tool>
            <Tool $off={noFont}><Glyph $s={5} $b>A</Glyph></Tool>
          </Line>
          <Line $gap={1}>
            <Tool $off={noFont} $on={f.bold}><Glyph $b>B</Glyph></Tool>
            <Tool $off={noFont}><Glyph $i $b>I</Glyph></Tool>
            <Tool $off={noFont}><Glyph $u>U</Glyph><Down /></Tool>
            <Divider />
            <Tool $off={off}><BordersIcon /><Down /></Tool>
            <Divider />
            <Tool $off={off}><BucketIcon /><Down /></Tool>
            <Tool $off={noFont}><Glyph $b $bar="#d8231c">A</Glyph><Down /></Tool>
          </Line>
        </GroupBody>
        <GroupLabel><i /><span>Font</span><Corner /></GroupLabel>
      </Group>
      <Group $w={113}>
        <GroupBody $rows>
          <Line $gap={1}>
            <Tool $off={off}><Bars at={1} /></Tool>
            <Tool $off={off}><Bars at={3} /></Tool>
            <Tool $off={off} $on={ready}><Bars at={5} /></Tool>
            <Divider />
            <Tool $off={off}><AngleIcon /><Down /></Tool>
            <Gap $n={1} />
            <Divider />
            <Tool $off={off} $on={f.wrap}><WrapIcon />Wrap Text</Tool>
            <Gap $n={4} />
          </Line>
          <Line $gap={1}>
            <Tool $off={off}><Bars kind="left" /></Tool>
            <Tool $off={off}><Bars kind="center" /></Tool>
            <Tool $off={off}><Bars kind="right" /></Tool>
            <Divider />
            <Tool $off={off}><IndentIcon /></Tool>
            <Tool $off={off}><IndentIcon flip /></Tool>
            <Divider />
            <Tool $off={off}><MergeIcon />Merge &amp; Center <Down /></Tool>
          </Line>
        </GroupBody>
        <GroupLabel><i /><span>Alignment</span><Corner /></GroupLabel>
      </Group>
      <Group $w={64}>
        <GroupBody $rows>
          <Line>
            <Pick $w={1} $off={off} aria-label="Number format" defaultValue={f.number}><option>{f.number}</option></Pick>
          </Line>
          <Line $spread $gap={0}>
            <Tool $off={off}><Glyph>$</Glyph><Down /></Tool>
            <Tool $off={off}><Glyph>%</Glyph></Tool>
            <Tool $off={off}><Glyph $b>,</Glyph></Tool>
            <Divider />
            <Tool $off={off}><DecimalIcon /></Tool>
            <Tool $off={off}><DecimalIcon flip /></Tool>
          </Line>
        </GroupBody>
        <GroupLabel><i /><span>Number</span><Corner /></GroupLabel>
      </Group>
      <Group $w={77}>
        <GroupBody>
          <Big $w={31} $off={off}><GridIcon kind="cond" /><span>Conditional<br />Formatting ▾</span></Big>
          <Big $w={24} $off={off}><GridIcon kind="table" /><span>Format<br />as Table ▾</span></Big>
          <Big $w={18} $off={off}><GridIcon kind="cell" /><span>Cell<br />Styles ▾</span></Big>
        </GroupBody>
        <GroupLabel><i /><span>Styles</span><i /></GroupLabel>
      </Group>
      <Group $w={60}>
        <GroupBody>
          <Big $w={1} $off={off}><CellsIcon kind="insert" /><span>Insert</span><Down /></Big>
          <Big $w={1} $off={off}><CellsIcon kind="delete" /><span>Delete</span><Down /></Big>
          <Big $w={1} $off={noFont}><CellsIcon kind="format" /><span>Format</span><Down /></Big>
        </GroupBody>
        <GroupLabel><i /><span>Cells</span><i /></GroupLabel>
      </Group>
      <Group $w={78}>
        <GroupBody $gap={3}>
          <Stack>
            <Small><SigmaIcon />AutoSum <Down /></Small>
            <Small $off={off}><FillIcon />Fill <Down /></Small>
            <Small><EraserIcon />Clear <Down /></Small>
          </Stack>
          <Big $w={1} $off={off}><SortIcon /><span>Sort &amp;<br />Filter ▾</span></Big>
          <Big $w={1}><FindIcon /><span>Find &amp;<br />Select ▾</span></Big>
        </GroupBody>
        <GroupLabel><i /><span>Editing</span><i /></GroupLabel>
      </Group>
      <Group $w={51} $last />
    </Ribbon>
  );
};

const Sheet = ({ f }) => {
  const cols = letters.slice(0, letters.indexOf(f.last) + 1);
  const widths = cols.map((c) => f.widths[c] || 64);
  const spare = 1346 - 26 - widths.reduce((a, b) => a + b, 0);
  const rows = [];
  for (let n = f.from; n <= f.to; n += 1) {
    rows.push({ n, h: (f.skip || []).includes(n) ? 1 : f.heights[n] || 1 });
  }
  // the last row is the one cut off by the bottom of the view
  rows.push({ n: f.cut || '', h: f.cut ? 1.3 : 0.3, cut: true });
  const track = (n) => `minmax(0, ${n}fr)`;
  return (
    <Grid
      $cols={[26, ...widths, spare].map(track).join(' ')}
      $rows={`9px ${rows.map((r) => track(r.h * 10)).join(' ')}`}
    >
      <thead>
        <tr>
          <ColHead />
          {cols.map((c) => <ColHead key={c} scope="col" $on={c === f.col}>{c}</ColHead>)}
          <ColHead />
        </tr>
      </thead>
      <tbody>
        {rows.map((r) => (
          <tr key={r.n}>
            <RowHead scope="row" $on={r.n === f.row}>{r.cut ? '' : r.n}</RowHead>
            {cols.map((c) => {
              const cell = f.cells[c + r.n] || {};
              return (
                <Cell
                  key={c}
                  $top={r.cut}
                  $num={cell.num}
                  $bold={cell.bold}
                  $rule={cell.rule}
                  $mode={cell.mode}
                  $ants={cell.ants}
                >
                  {cell.text && <span>{cell.text}</span>}
                  {cell.caret && <Caret />}
                </Cell>
              );
            })}
            <Cell />
          </tr>
        ))}
      </tbody>
    </Grid>
  );
};

const Frame = ({ f }) => {
  const ready = f.mode === 'ready';
  const long = f.state.length > 10;
  const [before, size, after] = f.scroll;
  return (
    <Window aria-label={`llp ${f.name}`}>
      <TopBar />
      <RibbonBar f={f} />
      <FormulaBar>
        <NameBox aria-label="Name box" defaultValue={f.name} />
        <Down c="#333" />
        <FormulaTools>
          {!ready && <StrokeIcon d="M2 2l6 6M8 2L2 8" />}
          {!ready && <StrokeIcon d="M1 5l3 4 5-8" />}
          <Glyph $b $i>fx</Glyph>
        </FormulaTools>
        <FormulaInput aria-label="Formula" defaultValue={f.formula} />
        <Expand aria-label="Expand formula bar"><Down /></Expand>
      </FormulaBar>
      <SheetArea>
        <Sheet f={f} />
        <VScroll>
          <SplitBox />
          <Arrow aria-label="Scroll up"><Svg w={4} h={3} box="0 0 8 6"><path d="M0 6h8L4 0z" fill="#40454d" /></Svg></Arrow>
          <Track>
            <Gap $n={before} />
            <Thumb $n={size} />
            <Gap $n={after} />
          </Track>
          <Arrow aria-label="Scroll down"><Svg w={4} h={3} box="0 0 8 6"><path d="M0 0h8L4 6z" fill="#40454d" /></Svg></Arrow>
        </VScroll>
        {f.blob && <Blob x={f.blob[0]} y={f.blob[1]} />}
        {f.target && <Pin $x={f.target[0]} $y={f.target[1]}>{cursors.target}</Pin>}
        <Pin $x={f.cursor[1]} $y={f.cursor[2]}>{cursors[f.cursor[0]]}</Pin>
        {(f.tips || []).map((t) => <Tip key={t.x} $x={t.x} $y={t.y}><span>{t.text}</span></Tip>)}
      </SheetArea>
      <SheetTabs>
        <NavArrows><NavIcon bar /><NavIcon /><NavIcon flip /><NavIcon flip bar /></NavArrows>
        {['Exhibit', 'Sheet2', 'Ex 1', 'Ex 2', 'Ex 3', 'Ex 4'].map((t) => <SheetTab key={t} $on={t === 'Sheet2'}>{t}</SheetTab>)}
        <TabSpace><Svg w={6} box="0 0 12 12"><path d="M4 3h7v8H4z" fill="#fff" stroke="#5a79b8" /><path d="M1 1l4 4M5 1L1 5" stroke="#d9a33a" strokeWidth="1.6" /></Svg></TabSpace>
        <HScroll>
          <Arrow aria-label="Scroll left"><NavIcon /></Arrow>
          <Track $h>
            <Thumb $h $n={f.widths.K ? 200 : 203} />
            <Gap $n={f.widths.K ? 15 : 12} />
          </Track>
          <Arrow aria-label="Scroll right"><NavIcon flip /></Arrow>
          <SplitBox />
        </HScroll>
      </SheetTabs>
      <StatusBar>
        <StatusPart>
          <span>{f.state}</span>
          {!long && (
            <>
              <Divider />
              <Svg w={7}><path d="M1 2h12v11H1z" fill="#fff" stroke="#6a84bb" /><path d="M1 2h12v3H1z" fill="#6a94d8" /><circle cx="4" cy="4" r="3" fill="#cf4b3e" /></Svg>
              <Divider />
            </>
          )}
        </StatusPart>
        <StatusPart>
          <Divider />
          <ViewIcon on={ready} d="M2 7h10M7 3v9" />
          <ViewIcon d="M5 3v9M9 3v9" />
          <ViewIcon d="M7 3v6h5" />
          <Faded $off={!ready}>
            <span>100%</span>
            <Svg w={6} box="0 0 12 12"><circle cx="6" cy="6" r="5" fill="#fff" stroke="#7d828a" /><path d="M3 6h6" stroke="#444" strokeWidth="1.6" /></Svg>
            <Zoom type="range" aria-label="Zoom" defaultValue="50" $off={!ready} />
            <Svg w={6} box="0 0 12 12"><circle cx="6" cy="6" r="5" fill="#fff" stroke="#7d828a" /><path d="M3 6h6M6 3v6" stroke="#444" strokeWidth="1.6" /></Svg>
          </Faded>
        </StatusPart>
      </StatusBar>
    </Window>
  );
};

const App = () => (
  <>
    <GlobalStyle />
    <Wall>
      {frames.map((f) => <Frame key={f.name} f={f} />)}
    </Wall>
  </>
);

export default App;
